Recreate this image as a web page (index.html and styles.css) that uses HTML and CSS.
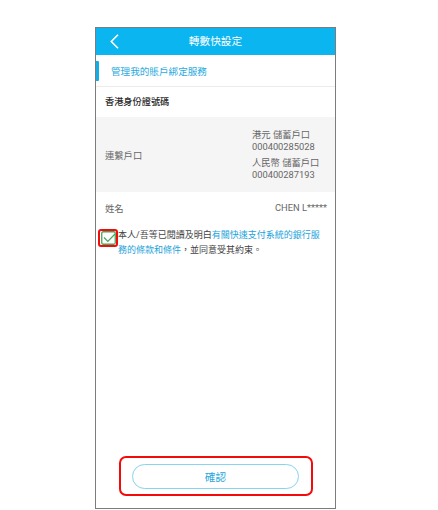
FILE: index.html
```html
<!DOCTYPE html>
<html lang="zh-Hant">
<head>
<meta charset="utf-8">
<title>轉數快設定</title>
<link rel="stylesheet" href="styles.css">
</head>
<body>
<div class="phone">
  <header class="topbar">
    <div class="back">
      <svg width="9" height="15" viewBox="0 0 9 15"><polyline points="8,0.8 1.3,7.5 8,14.2" fill="none" stroke="#fff" stroke-width="1.6"/></svg>
    </div>
    <div class="title">轉數快設定</div>
    <div></div>
  </header>
  <div class="navrow">
    <span class="accent"></span>
    <span class="navtext">管理我的賬戶綁定服務</span>
  </div>
  <div class="idrow">香港身份證號碼</div>
  <div class="accounts">
    <div class="label">連繫戶口</div>
    <div class="acctlist">
      <div class="acct">
        <div>港元 儲蓄戶口</div>
        <div>000400285028</div>
      </div>
      <div class="acct">
        <div>人民幣 儲蓄戶口</div>
        <div>000400287193</div>
      </div>
    </div>
  </div>
  <div class="namerow">
    <span class="label">姓名</span>
    <span class="value">CHEN L*****</span>
  </div>
  <div class="agree">
    <div class="markbox">
      <svg width="15" height="14" viewBox="0 0 15 14"><rect x="0.75" y="0.75" width="13.5" height="12.5" rx="1.5" fill="#fff" stroke="#4aa35a" stroke-width="1.3"/><polyline points="3,6.5 6.8,10.3 14,3" fill="none" stroke="#4aa35a" stroke-width="1.2"/></svg>
    </div>
    <p class="agreetext">本人/吾等已閱讀及明白<span class="link">有關快速支付系統的銀行服務的條款和條件</span>，並同意受其約束。</p>
  </div>
  <div class="spacer"></div>
  <div class="footer">
    <div class="highlight">
      <button class="confirm" type="button">確認</button>
    </div>
  </div>
</div>
</body>
</html>
```
FILE: styles.css
```css
html, body {
  margin: 0;
  padding: 0;
  background: #ffffff;
}
body {
  font-family: "Roboto", "Noto Sans CJK TC", sans-serif;
  font-size: 9.3px;
  color: #666666;
}
.phone {
  box-sizing: border-box;
  width: 241px;
  height: 482px;
  margin: 27px 0 0 95px;
  border: 1px solid #7c7c7c;
  display: flex;
  flex-direction: column;
  background: #ffffff;
}
.topbar {
  height: 27px;
  background: #0bb5ef;
  display: grid;
  grid-template-columns: 1fr auto 1fr;
  align-items: center;
}
.back {
  padding-left: 14px;
  display: flex;
  align-items: center;
}
.back svg { display: block; }
.title {
  color: #ffffff;
  font-size: 10.7px;
  line-height: 27px;
}
.navrow {
  height: 31px;
  border-bottom: 1px solid #ececec;
  display: flex;
  align-items: center;
}
.accent {
  width: 2.5px;
  height: 20px;
  background: #13aee6;
  border-radius: 0 1px 1px 0;
}
.navtext {
  margin-left: 12.5px;
  color: #2aaade;
  font-size: 9.6px;
}
.idrow {
  height: 30px;
  line-height: 30px;
  padding-left: 9px;
  color: #2a2a2a;
  font-weight: 500;
  font-size: 9.2px;
}
.accounts {
  background: #f5f5f5;
  display: flex;
  align-items: center;
  padding: 12px 8px 11px 9px;
}
.accounts .label {
  flex: 1;
}
.acctlist {
  width: 75px;
  display: flex;
  flex-direction: column;
  gap: 4px;
}
.acct {
  line-height: 12px;
}
.namerow {
  height: 31px;
  display: flex;
  align-items: center;
  justify-content: space-between;
  padding: 0 8px 0 9px;
}
.agree {
  display: flex;
  align-items: flex-start;
  padding: 4.5px 10px 0 2px;
}
.markbox {
  box-sizing: border-box;
  width: 20px;
  height: 18px;
  margin-top: 1.5px;
  border: 2px solid #f20d0d;
  border-radius: 3px;
  display: flex;
  align-items: center;
  justify-content: center;
  flex: none;
}
.markbox svg { display: block; }
.agreetext {
  margin: 0;
  font-size: 9px;
  line-height: 15px;
  color: #444444;
}
.link {
  color: #22a3da;
}
.spacer {
  flex: 1;
}
.footer {
  display: flex;
  justify-content: center;
  padding-bottom: 12px;
}
.highlight {
  box-sizing: border-box;
  width: 194px;
  height: 40px;
  border: 2px solid #f50a0a;
  border-radius: 7px;
  display: flex;
  align-items: center;
  justify-content: center;
}
.confirm {
  box-sizing: border-box;
  width: 167px;
  height: 25px;
  border: 1px solid #86d4ef;
  border-radius: 13px;
  background: #ffffff;
  color: #26a6dc;
  font-family: "Roboto", "Noto Sans CJK TC", sans-serif;
  font-size: 10.7px;
  padding: 0;
}
```
